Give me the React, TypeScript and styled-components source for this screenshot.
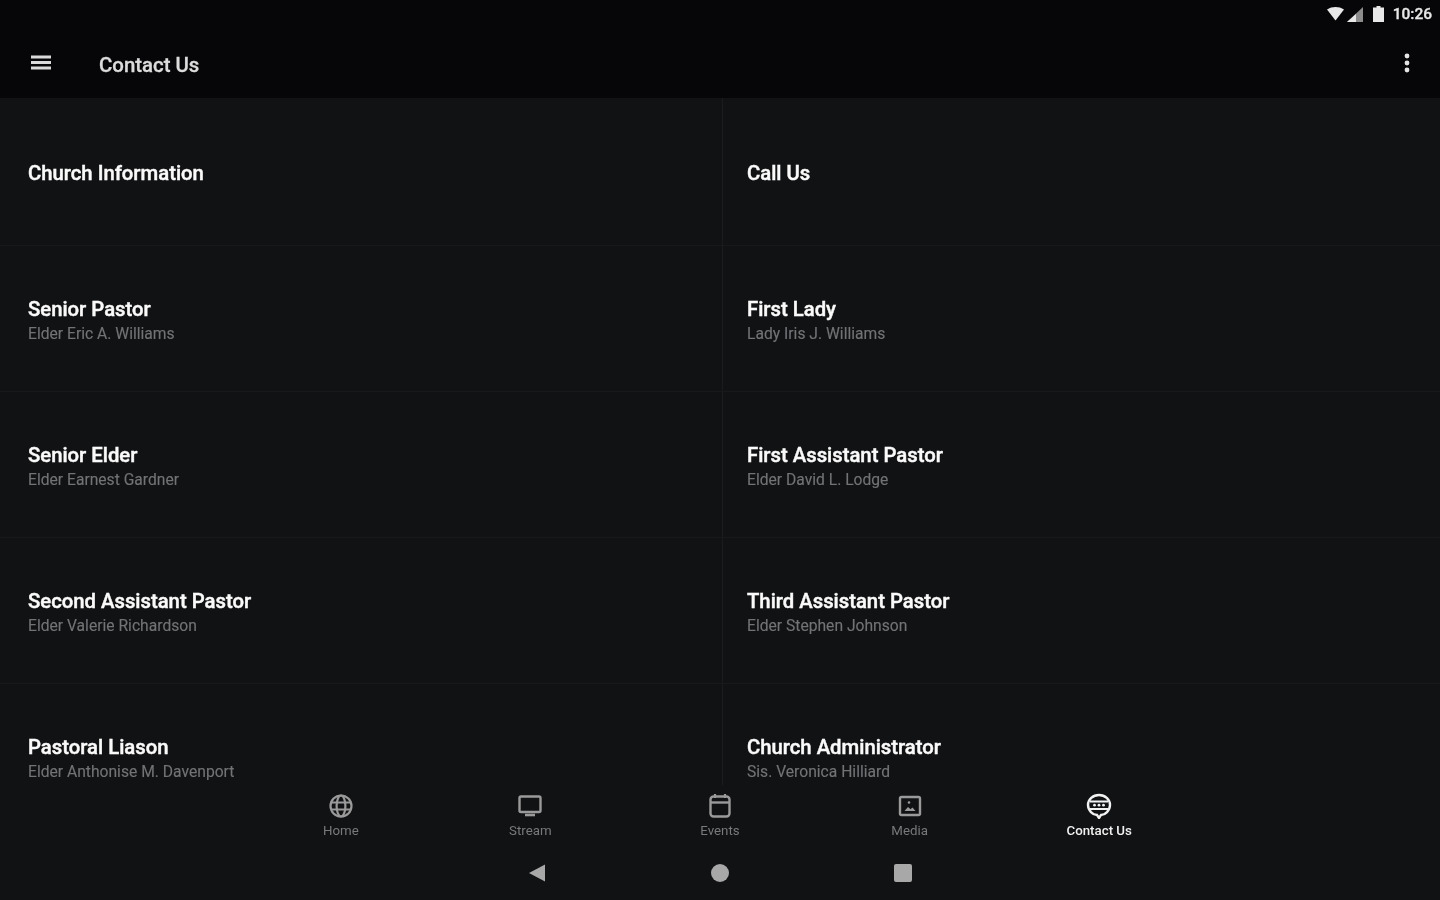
import React from "react";
import styled, { createGlobalStyle } from "styled-components";

const Global = createGlobalStyle`
  html, body { margin: 0; padding: 0; background: #111214; }
  * { box-sizing: border-box; }
`;

const Screen = styled.div`
  width: 1440px;
  height: 900px;
  display: flex;
  flex-direction: column;
  overflow: hidden;
  background: #111214;
  font-family: Roboto, "Liberation Sans", sans-serif;
  filter: blur(0.7px);
`;

const Header = styled.header`
  flex: none;
  height: 98px;
  background: #060608;
  display: flex;
  flex-direction: column;
`;

const StatusBar = styled.div`
  height: 28px;
  display: flex;
  align-items: center;
  justify-content: flex-end;
  padding-right: 8px;
  color: #e8e8e8;
`;

const StatusIcon = styled.svg<{ $gap: number }>`
  display: block;
  margin-right: ${(p) => p.$gap}px;
`;

const Clock = styled.span`
  font-size: 15.5px;
  font-weight: 500;
  line-height: 28px;
  -webkit-text-stroke: 0.3px #e8e8e8;
`;

const Toolbar = styled.div`
  height: 70px;
  display: flex;
  align-items: center;
  padding: 0 30px 0 29px;
`;

const ToolbarIcon = styled.svg`
  display: block;
  flex: none;
`;

const ToolbarTitle = styled.h1`
  flex: 1;
  margin: 0 0 -3px 46px;
  font-size: 20.4px;
  line-height: 28px;
  font-weight: 500;
  color: #dcdcdc;
  -webkit-text-stroke: 0.3px #dcdcdc;
`;

const Main = styled.main`
  flex: 1;
  min-height: 0;
  overflow: hidden;
  display: grid;
  grid-template-columns: 723px 717px;
  grid-template-rows: 148px;
  grid-auto-rows: 146px;
  align-content: start;
`;

const Cell = styled.div<{ $left: boolean; $single: boolean }>`
  display: flex;
  flex-direction: column;
  justify-content: center;
  padding: ${(p) => (p.$single ? 2 : 5)}px 0 0 ${(p) => (p.$left ? 28 : 24)}px;
  border-bottom: 1px solid #17191b;
  border-right: ${(p) => (p.$left ? "1px solid #1a1c1e" : "0")};
`;

const CellTitle = styled.div`
  font-size: 20.3px;
  line-height: 24px;
  font-weight: 500;
  color: #fafafa;
  -webkit-text-stroke: 0.45px #fafafa;
`;

const CellSub = styled.div`
  margin-top: 1px;
  font-size: 15.65px;
  line-height: 24px;
  font-weight: 400;
  color: #727375;
  -webkit-text-stroke: 0.15px #727375;
`;

const Bottom = styled.footer`
  flex: none;
  height: 115px;
  background: #111214;
  display: flex;
  flex-direction: column;
  align-items: center;
`;

const Tabs = styled.nav`
  width: 948px;
  height: 60px;
  display: grid;
  grid-template-columns: repeat(5, 1fr);
`;

const Tab = styled.div<{ $active?: boolean }>`
  display: flex;
  flex-direction: column;
  align-items: center;
  padding-top: 8px;
  color: ${(p) => (p.$active ? "#f2f2f2" : "#9a9a9b")};
`;

const TabIcon = styled.svg`
  display: block;
  width: 26px;
  height: 26px;
`;

const TabLabel = styled.span<{ $active?: boolean }>`
  margin-top: 4px;
  font-size: 13.3px;
  line-height: 16px;
  font-weight: ${(p) => (p.$active ? 500 : 400)};
  color: ${(p) => (p.$active ? "#f0f0f0" : "#78797b")};
`;

const SystemNav = styled.div`
  width: 386px;
  height: 30px;
  margin-top: 13px;
  display: flex;
  align-items: center;
  justify-content: space-between;
  color: #a8a8a8;
`;

const SysIcon = styled.svg`
  display: block;
  width: 20px;
  height: 20px;
`;

const rows: [string, string?][][] = [
  [["Church Information"], ["Call Us"]],
  [["Senior Pastor", "Elder Eric A. Williams"], ["First Lady", "Lady Iris J. Williams"]],
  [["Senior Elder", "Elder Earnest Gardner"], ["First Assistant Pastor", "Elder David L. Lodge"]],
  [["Second Assistant Pastor", "Elder Valerie Richardson"], ["Third Assistant Pastor", "Elder Stephen Johnson"]],
  [["Pastoral Liason", "Elder Anthonise M. Davenport"], ["Church Administrator", "Sis. Veronica Hilliard"]],
];

const icons: Record<string, React.ReactNode> = {
  Home: (
    <>
      <circle cx="13" cy="13" r="10.5" fill="none" stroke="currentColor" strokeWidth="2.2" />
      <ellipse cx="13" cy="13" rx="4.4" ry="10.5" fill="none" stroke="currentColor" strokeWidth="2.2" />
      <path d="M3 9.500h20M3 16.500h20" stroke="currentColor" strokeWidth="2.2" />
    </>
  ),
  Stream: (
    <>
      <rect x="2.500" y="3.500" width="21" height="15.500" rx="1.500" fill="none" stroke="currentColor" strokeWidth="2.400" />
      <path d="M8 22h10" stroke="currentColor" strokeWidth="2.600" />
    </>
  ),
  Events: (
    <>
      <rect x="3.500" y="3.500" width="19" height="20" rx="3" fill="none" stroke="currentColor" strokeWidth="2.400" />
      <path d="M3 9.500h20" stroke="currentColor" strokeWidth="2.400" />
      <path d="M8 1v4M18 1v4" stroke="currentColor" strokeWidth="2.200" />
    </>
  ),
  Media: (
    <>
      <rect x="3" y="4" width="20" height="18" rx="1.500" fill="none" stroke="currentColor" strokeWidth="2.400" />
      <path d="M7.500 18l3.500-4 2.500 2.200 2-1.700 3 3.500z" fill="currentColor" />
      <circle cx="12" cy="9.500" r="1.300" fill="currentColor" />
    </>
  ),
  "Contact Us": (
    <>
      <path
        d="M13 2C6.900 2 2 6.500 2 12s4.900 10 9 10l2 3 2-3c4.100 0 9-4.500 9-10S19.100 2 13 2z"
        fill="none"
        stroke="currentColor"
        strokeWidth="2.400"
      />
      <path d="M4 8.500h18M4 16h18" stroke="currentColor" strokeWidth="1.800" />
      <circle cx="8.500" cy="12.200" r="1.400" fill="currentColor" />
      <circle cx="13" cy="12.200" r="1.400" fill="currentColor" />
      <circle cx="17.500" cy="12.200" r="1.400" fill="currentColor" />
    </>
  ),
};

export default function App() {
  return (
    <Screen>
      <Global />
      <Header>
        <StatusBar>
          <StatusIcon $gap={3} width="17" height="14" viewBox="0 0 17 14">
            <path d="M0 2.500C2.500.8 5.500 0 8.500 0s6 .8 8.500 2.500L8.500 13.500z" fill="currentColor" />
          </StatusIcon>
          <StatusIcon $gap={10} width="16" height="15" viewBox="0 0 16 15">
            <path d="M16 0v15H0z" fill="#8c8c8c" />
            <path d="M9 7v8H0z" fill="currentColor" />
          </StatusIcon>
          <StatusIcon $gap={9} width="11" height="16" viewBox="0 0 11 16">
            <path d="M3.500 0h4v1.500H11V16H0V1.500h3.500z" fill="currentColor" />
          </StatusIcon>
          <Clock>10:26</Clock>
        </StatusBar>
        <Toolbar>
          <ToolbarIcon width="24" height="18" viewBox="0 0 24 18">
            <path d="M2 3h20M2 8.500h20M2 14h20" stroke="#dadada" strokeWidth="2.800" />
          </ToolbarIcon>
          <ToolbarTitle>Contact Us</ToolbarTitle>
          <ToolbarIcon width="6" height="20" viewBox="0 0 6 20">
            <circle cx="3" cy="3" r="2.400" fill="#e4e4e4" />
            <circle cx="3" cy="10" r="2.400" fill="#e4e4e4" />
            <circle cx="3" cy="17" r="2.400" fill="#e4e4e4" />
          </ToolbarIcon>
        </Toolbar>
      </Header>
      <Main>
        {rows.flatMap((row, r) =>
          row.map(([title, sub], c) => (
            <Cell key={`${r}-${c}`} $left={c === 0} $single={!sub}>
              <CellTitle>{title}</CellTitle>
              {sub && <CellSub>{sub}</CellSub>}
            </Cell>
          ))
        )}
      </Main>
      <Bottom>
        <Tabs>
          {Object.keys(icons).map((name) => {
            const active = name === "Contact Us";
            return (
              <Tab key={name} $active={active}>
                <TabIcon viewBox="0 0 26 26">{icons[name]}</TabIcon>
                <TabLabel $active={active}>{name}</TabLabel>
              </Tab>
            );
          })}
        </Tabs>
        <SystemNav>
          <SysIcon viewBox="0 0 20 20">
            <path d="M2 10 L18 1.500V18.500z" fill="currentColor" />
          </SysIcon>
          <SysIcon viewBox="0 0 20 20">
            <circle cx="10" cy="10" r="9" fill="currentColor" />
          </SysIcon>
          <SysIcon viewBox="0 0 20 20">
            <rect x="1" y="1" width="18" height="18" rx="2" fill="currentColor" />
          </SysIcon>
        </SystemNav>
      </Bottom>
    </Screen>
  );
}
